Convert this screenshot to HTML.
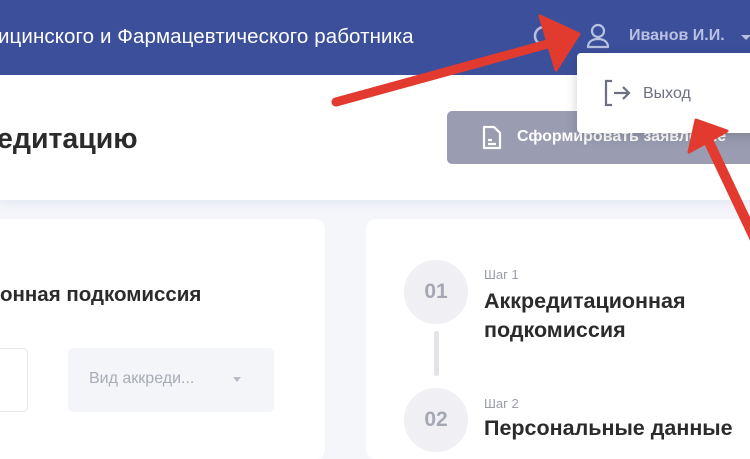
<!DOCTYPE html>
<html><head><meta charset="utf-8"><style>
*{margin:0;padding:0;box-sizing:border-box}
body{width:750px;height:430px;overflow:hidden;background:#f5f6fa;font-family:"Liberation Sans","Noto Sans CJK SC",sans-serif;position:relative}
.hdr{position:absolute;left:0;top:0;width:750px;height:75px;background:#3c4f9b}
.hdr .t{position:absolute;left:-2px;top:25px;font-size:20.5px;color:#fff;white-space:nowrap;letter-spacing:0.1px}
.user{position:absolute;left:629px;top:27px;font-size:16px;font-weight:bold;color:#b9c1e0;white-space:nowrap}
.top{position:absolute;left:0;top:75px;width:750px;height:125px;background:#fff;box-shadow:0 4px 10px rgba(60,80,160,.08)}
.title{position:absolute;left:-3px;top:123px;font-size:28.5px;font-weight:bold;color:#2b2b2b;white-space:nowrap}
.btn{position:absolute;left:447px;top:111px;width:320px;height:53px;background:#9a9db2;border-radius:5px;color:#fff;font-weight:bold;font-size:16px}
.btn span{position:absolute;left:70px;top:17px;white-space:nowrap}
.dd{position:absolute;left:577px;top:53px;width:190px;height:80px;background:#fff;border-radius:4px;box-shadow:0 3px 12px rgba(0,0,0,.18)}
.dd span{position:absolute;left:66px;top:32px;font-size:16px;color:#6d7080}
.card{position:absolute;background:#fff;border-radius:10px}
.c1{left:-20px;top:219px;width:345px;height:240px}
.c2{left:366px;top:219px;width:420px;height:240px}
.sub{position:absolute;left:0;top:283px;font-size:20.5px;font-weight:bold;color:#2b2b2b;white-space:nowrap}
.inp{position:absolute;left:-10px;top:348px;width:38px;height:64px;border:1px solid #e4e6ee;border-radius:5px;background:#fff}
.sel{position:absolute;left:68px;top:348px;width:206px;height:64px;background:#f4f5f9;border-radius:5px}
.sel span{position:absolute;left:21px;top:22px;font-size:16px;color:#a9abb8}
.sel i{position:absolute;left:165px;top:29px;border:4px solid transparent;border-top:5px solid #b8bac6}
.circ{position:absolute;left:404px;width:64px;height:64px;border-radius:50%;background:#f0f0f4;color:#a5a7b4;font-weight:bold;font-size:21px;text-align:center;line-height:64px}
.line{position:absolute;left:434px;top:331px;width:5px;height:45px;background:#e3e4ea;border-radius:3px}
.step{position:absolute;left:484px;font-size:13px;color:#9b9dab}
.sh{position:absolute;left:484px;font-size:21.5px;font-weight:bold;color:#2b2b2b;line-height:29px}
</style></head><body>
<div class="top"></div>
<div class="hdr"><div class="t">ицинского и Фармацевтического работника</div>
<svg style="position:absolute;left:530px;top:22px" width="20" height="30"><circle cx="14" cy="14" r="9" fill="none" stroke="#b9c1e0" stroke-width="2.5"/></svg>
<svg style="position:absolute;left:585px;top:22px" width="26" height="28" viewBox="0 0 26 28"><circle cx="13" cy="9" r="6" fill="none" stroke="#b9c1e0" stroke-width="2.2"/><path d="M3 25c0-5 4-8 10-8s10 3 10 8z" fill="none" stroke="#b9c1e0" stroke-width="2.2" stroke-linejoin="round"/></svg>
<div class="user">Иванов И.И.</div>
<svg style="position:absolute;left:741px;top:34px" width="10" height="8"><path d="M0 1h10l-5 5z" fill="#b9c1e0"/></svg>
</div>
<div class="title">едитацию</div>
<div class="btn"><svg style="position:absolute;left:34px;top:14px" width="22" height="26" viewBox="0 0 22 26"><path d="M3 2h10l6 6v15H3z" fill="none" stroke="#fff" stroke-width="2.2" stroke-linejoin="round"/><path d="M7 15h4M7 19h8" stroke="#fff" stroke-width="2.2"/></svg><span>Сформировать заявление</span></div>
<div class="dd"><svg style="position:absolute;left:26px;top:25px" width="30" height="30" viewBox="0 0 30 30"><path d="M9 3H3v24h6" fill="none" stroke="#6d7080" stroke-width="2.2"/><path d="M11 15h15M20 9l6 6-6 6" fill="none" stroke="#6d7080" stroke-width="2.2"/></svg><span>Выход</span></div>
<div class="card c1"></div>
<div class="card c2"></div>
<div class="sub">онная подкомиссия</div>
<div class="inp"></div>
<div class="sel"><span>Вид аккреди...</span><i></i></div>
<div class="circ" style="top:260px">01</div>
<div class="line"></div>
<div class="circ" style="top:388px">02</div>
<div class="step" style="top:267px">Шаг 1</div>
<div class="sh" style="top:287px">Аккредитационная<br>подкомиссия</div>
<div class="step" style="top:396px">Шаг 2</div>
<div class="sh" style="top:414px">Персональные данные</div>
<svg style="position:absolute;left:0;top:0" width="750" height="430">
<line x1="336" y1="102" x2="555" y2="42" stroke="#e33a2f" stroke-width="9" stroke-linecap="round"/>
<path d="M540 16L579 34L556 70Z" fill="#e33a2f" stroke="#e33a2f" stroke-width="3" stroke-linejoin="round"/>
<line x1="760" y1="250" x2="708" y2="140" stroke="#e33a2f" stroke-width="10" stroke-linecap="round"/>
<path d="M696 120L727 131L689 152Z" fill="#e33a2f" stroke="#e33a2f" stroke-width="3" stroke-linejoin="round"/>
</svg>
</body></html>
